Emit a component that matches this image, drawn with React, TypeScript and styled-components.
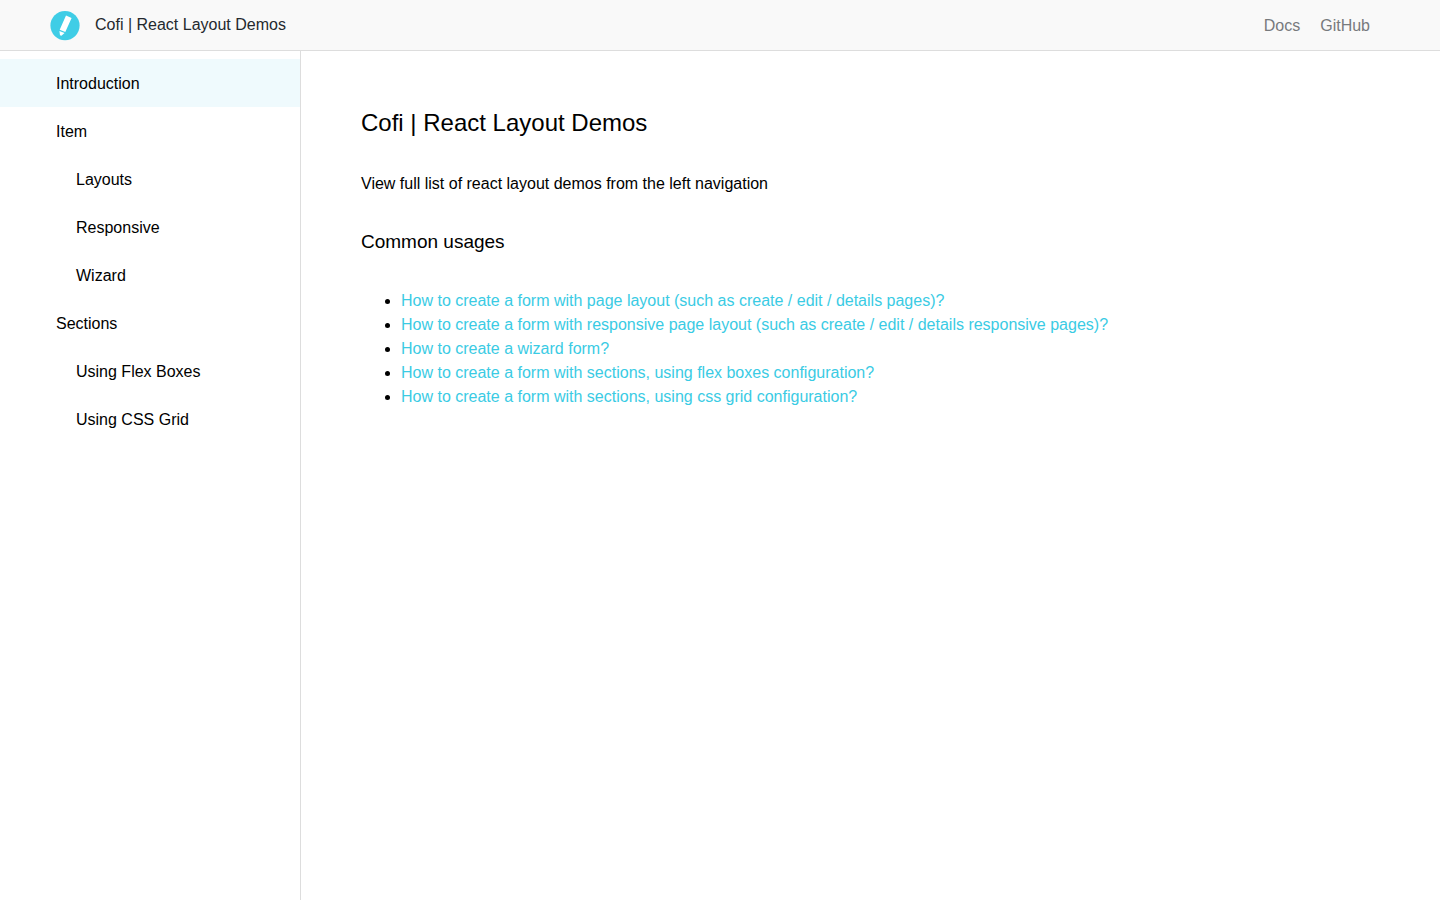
import React from "react";
import styled, { createGlobalStyle } from "styled-components";

const GlobalStyle = createGlobalStyle`
  * { box-sizing: border-box; }
  body {
    margin: 0;
    background: #fff;
    color: #000;
    font-family: "Liberation Sans", Helvetica, Arial, sans-serif;
    font-size: 16px;
    line-height: 24px;
  }
`;

const Page = styled.div`
  display: flex;
  flex-direction: column;
  min-height: 100vh;
`;

const Header = styled.header`
  display: flex;
  align-items: center;
  justify-content: space-between;
  height: 51px;
  padding: 1px 70px 0 50px;
  background: #f9f9f9;
  border-bottom: 1px solid #ddd;
`;

const Brand = styled.a`
  display: flex;
  align-items: center;
  gap: 15px;
  color: #24292e;
  text-decoration: none;
`;

const BrandName = styled.span`
  padding-bottom: 2px;
`;

const HeaderNav = styled.nav`
  display: flex;
  gap: 20px;
`;

const HeaderLink = styled.a`
  color: #777a7d;
  text-decoration: none;
`;

const Body = styled.div`
  display: flex;
  flex: 1;
`;

const Sidebar = styled.nav`
  flex: 0 0 301px;
  padding-top: 8px;
  border-right: 1px solid #ddd;
`;

const MenuList = styled.ul`
  margin: 0;
  padding: 0;
  list-style: none;
`;

const MenuLink = styled.a<{ $nested?: boolean; $active?: boolean }>`
  display: block;
  padding: 13px 16px 11px ${(p) => (p.$nested ? 76 : 56)}px;
  background: ${(p) => (p.$active ? "#effafd" : "transparent")};
  color: #000;
  text-decoration: none;
`;

const Content = styled.main`
  flex: 1;
  padding: 56px 60px;
`;

const Title = styled.h1`
  margin: 0 0 33px;
  font-size: 24px;
  font-weight: 400;
  line-height: 32px;
`;

const Lead = styled.p`
  margin: 0 0 32px;
`;

const Subtitle = styled.h2`
  margin: 0 0 33px;
  font-size: 19px;
  font-weight: 400;
  line-height: 28px;
`;

const LinkList = styled.ul`
  margin: 0;
  padding-left: 40px;
`;

const ContentLink = styled.a`
  color: #3acbe4;
  text-decoration: none;
`;

const menu = [
  { label: "Introduction", active: true },
  { label: "Item" },
  { label: "Layouts", nested: true },
  { label: "Responsive", nested: true },
  { label: "Wizard", nested: true },
  { label: "Sections" },
  { label: "Using Flex Boxes", nested: true },
  { label: "Using CSS Grid", nested: true },
];

const usages = [
  "How to create a form with page layout (such as create / edit / details pages)?",
  "How to create a form with responsive page layout (such as create / edit / details responsive pages)?",
  "How to create a wizard form?",
  "How to create a form with sections, using flex boxes configuration?",
  "How to create a form with sections, using css grid configuration?",
];

const Logo = () => (
  <svg width="30" height="30" viewBox="0 0 30 30" aria-hidden="true">
    <circle cx="15" cy="14.6" r="14.6" fill="#3fcde6" />
    <path
      d="M16 4.4 L21.6 6.9 L15.3 20.9 L9.7 18.7 Z M9.4 20 L14.6 22 L11.4 24.8 L10 24.2 Z"
      fill="#fff"
    />
  </svg>
);

export default function App() {
  return (
    <Page>
      <GlobalStyle />
      <Header>
        <Brand href="#home">
          <Logo />
          <BrandName>Cofi | React Layout Demos</BrandName>
        </Brand>
        <HeaderNav>
          <HeaderLink href="#docs">Docs</HeaderLink>
          <HeaderLink href="#github">GitHub</HeaderLink>
        </HeaderNav>
      </Header>
      <Body>
        <Sidebar>
          <MenuList>
            {menu.map((item) => (
              <li key={item.label}>
                <MenuLink href="#demo" $nested={item.nested} $active={item.active}>
                  {item.label}
                </MenuLink>
              </li>
            ))}
          </MenuList>
        </Sidebar>
        <Content>
          <Title>Cofi | React Layout Demos</Title>
          <Lead>View full list of react layout demos from the left navigation</Lead>
          <Subtitle>Common usages</Subtitle>
          <LinkList>
            {usages.map((text) => (
              <li key={text}>
                <ContentLink href="#usage">{text}</ContentLink>
              </li>
            ))}
          </LinkList>
        </Content>
      </Body>
    </Page>
  );
}
